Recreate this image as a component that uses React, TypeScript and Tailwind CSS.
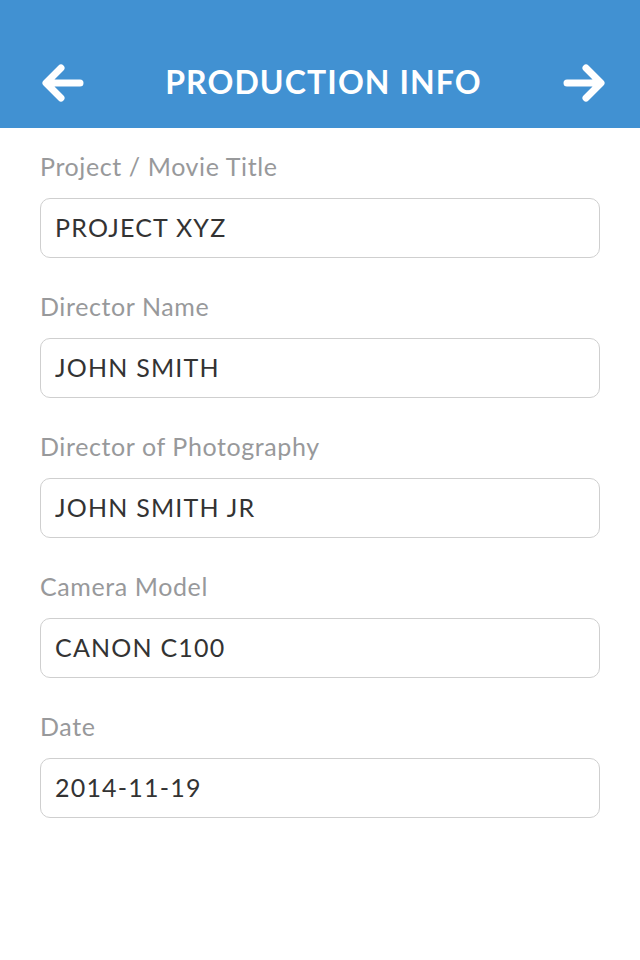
import React from 'react';

const fields = [
  { label: 'Project / Movie Title', value: 'PROJECT XYZ' },
  { label: 'Director Name', value: 'JOHN SMITH' },
  { label: 'Director of Photography', value: 'JOHN SMITH JR' },
  { label: 'Camera Model', value: 'CANON C100' },
  { label: 'Date', value: '2014-11-19' },
];

const Arrow: React.FC<{ dir: 'left' | 'right' }> = ({ dir }) => (
  <svg width="44" height="40" viewBox="0 0 44 40" className={dir === 'right' ? 'scale-x-[-1]' : ''}>
    <path
      d="M39 20 H6 M20 5 L5 20 L20 35"
      fill="none"
      stroke="white"
      strokeWidth="7"
      strokeLinecap="round"
      strokeLinejoin="round"
    />
  </svg>
);

export default function App() {
  return (
    <div className="w-[640px] h-[960px] bg-white font-['Lato',sans-serif]">
      <header className="h-[128px] bg-[#4191d2] flex items-end justify-between pl-[41px] pr-[34px] pb-[25px]">
        <Arrow dir="left" />
        <h1 className="text-white font-bold text-[32px] tracking-[1.1px] leading-none mb-[5px]">PRODUCTION INFO</h1>
        <Arrow dir="right" />
      </header>
      <form className="flex flex-col px-[40px] pt-[22px]">
        {fields.map(f => (
          <label key={f.label} className="flex flex-col mb-[32px]">
            <span className="text-[25px] leading-[32px] tracking-[0.6px] text-[#98999b] mb-[16px]">{f.label}</span>
            <input
              className="h-[60px] w-full rounded-[10px] border border-[#cfcfcf] px-[14px] pb-[3px] text-[25px] tracking-[1.2px] text-[#333] outline-none"
              defaultValue={f.value}
            />
          </label>
        ))}
      </form>
    </div>
  );
}
